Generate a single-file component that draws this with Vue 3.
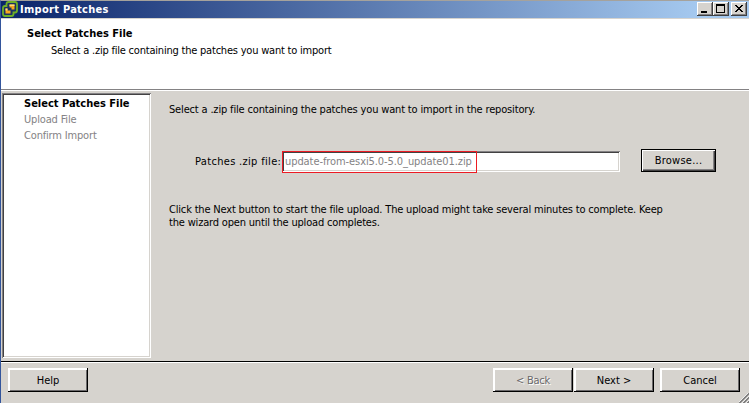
<script setup>
import { ref } from 'vue'

const steps = ['Select Patches File', 'Upload File', 'Confirm Import']
const current = ref(0)
const fileName = ref('update-from-esxi5.0-5.0_update01.zip')
</script>

<template>
  <div class="window">
    <header class="titlebar">
      <svg class="logo" width="16" height="17" viewBox="0 0 16 17">
        <path d="M6.5 1H13Q15 1 15 3V9.5Q15 11.5 13 11.5H11.5V13Q11.5 15 9.5 15H3Q1 15 1 13V7Q1 5 3 5H4.500V3Q4.500 1 6.500 1Z" fill="#1b3263" stroke="#6fb026" stroke-width="1.800" />
        <path d="M7.500 3.500h5v5h-3v-2h-2z" fill="#f9a81d" />
        <path d="M3.500 7.500h2v2h3v3h-5z" fill="#f9a81d" />
        <path d="M7.500 3.500h5v1.500h-5zM3.500 7.500h2v2h-2z" fill="#ffdc79" />
      </svg>
      <span class="caption">Import Patches</span>
      <div class="controls">
        <button class="ctl" aria-label="Minimize">
          <svg width="16" height="14" shape-rendering="crispEdges"><path d="M4 9h6v2H4z" /></svg>
        </button>
        <button class="ctl" aria-label="Maximize">
          <svg width="16" height="14" shape-rendering="crispEdges"><path d="M3 2h9v9H3zM4 4v6h7V4z" fill-rule="evenodd" /></svg>
        </button>
        <button class="ctl close" aria-label="Close">
          <svg width="16" height="14" shape-rendering="crispEdges">
            <path d="M4 3h2v1h1v1h2V4h1V3h2v1h-1v1h-1v1H9v1h1v1h1v1h1v1h-2V9H9V8H7v1H6v1H4V9h1V8h1V7h1V6H6V5H5V4H4z" />
          </svg>
        </button>
      </div>
    </header>

    <section class="heading">
      <h1>Select Patches File</h1>
      <p>Select a .zip file containing the patches you want to import</p>
    </section>

    <main class="body">
      <nav class="steps">
        <div v-for="(step, i) in steps" :key="step" class="step" :class="{ active: i === current }">{{ step }}</div>
      </nav>
      <section class="content">
        <p class="intro">Select a .zip file containing the patches you want to import in the repository.</p>
        <div class="field">
          <label class="label">Patches .zip file:</label>
          <div class="input"><span class="marked">{{ fileName }}</span></div>
          <button class="btn browse"><span>Browse...</span></button>
        </div>
        <p class="note">
          <span class="line">Click the Next button to start the file upload. The upload might take several minutes to complete. Keep</span>
          <span class="line">the wizard open until the upload completes.</span>
        </p>
      </section>
    </main>

    <footer class="footer">
      <button class="btn help"><span>Help</span></button>
      <button class="btn back"><span>&lt; Back</span></button>
      <button class="btn next"><span>Next &gt;</span></button>
      <button class="btn cancel"><span>Cancel</span></button>
      <svg class="grip" width="10" height="10" viewBox="0 0 10 10">
        <path d="M-1 10L10 -1M3 10L10 3M7 10L10 7" stroke="#fff" />
        <path d="M0 10.5L10.500 0M4 10.500L10.500 4M8 10.500L10.500 8" stroke="#777" stroke-width="1.500" />
      </svg>
    </footer>
  </div>
</template>

<style>
body {
  margin: 0;
}
</style>

<style scoped>
* {
  box-sizing: border-box;
}
.window {
  width: 749px;
  height: 403px;
  display: flex;
  flex-direction: column;
  overflow: hidden;
  background: #d6d3ce;
  border-left: 1px solid #33559c;
  border-top: 1px solid #a5a29c;
  color: #000;
  font: 11px/16px "DejaVu Sans Condensed", "DejaVu Sans", sans-serif;
  font-stretch: condensed;
  white-space: nowrap;
}
h1,
p {
  margin: 0;
  font-size: 11px;
}
.titlebar {
  height: 18px;
  flex: none;
  display: flex;
  background: linear-gradient(90deg, #0a246a, #a6caf0 94%);
  border-bottom: 1px solid #d6d3ce;
}
.logo {
  margin-left: 1px;
  flex: none;
}
.caption {
  margin-left: 2px;
  color: #fff;
  font-weight: bold;
  line-height: 17px;
  letter-spacing: 0.28px;
}
.controls {
  display: flex;
  margin: 1px 2px 0 auto;
}
.ctl {
  width: 16px;
  height: 14px;
  padding: 0;
  border: 0;
  background: #d6d3ce;
  box-shadow: inset -1px -1px #404040, inset 1px 1px #fff, inset -2px -2px #848284;
}
.ctl svg {
  display: block;
}
.close {
  margin-left: 2px;
}
.heading {
  height: 71px;
  flex: none;
  padding: 7px 0 0 26px;
  background: #fff;
  border-bottom: 1px solid #848284;
  box-shadow: 0 1px #fff;
}
.heading p {
  padding-left: 24px;
  line-height: 18px;
  letter-spacing: -0.21px;
}
.body {
  height: 272px;
  flex: none;
  display: flex;
  padding: 3px 0 3px 1px;
  border-bottom: 1px solid #000;
  box-shadow: 0 1px #fff;
}
.steps {
  width: 149px;
  padding: 2px 0 0 22px;
  background: #fff;
  box-shadow: inset 1px 1px #848284, inset -1px -1px #fff, inset 2px 2px #424142, inset -2px -2px #d6d3ce;
}
.step {
  height: 16px;
  line-height: 17px;
  color: #848284;
  letter-spacing: -0.17px;
}
.step.active {
  color: #000;
  font-weight: bold;
  letter-spacing: 0;
}
.content {
  flex: 1;
  padding: 8px 0 0 18px;
}
.intro {
  line-height: 17px;
  height: 16px;
  letter-spacing: -0.165px;
}
.field {
  display: flex;
  height: 24px;
  margin: 32px 0 0 26px;
}
.label {
  width: 87px;
  line-height: 25px;
  letter-spacing: 0.32px;
}
.input {
  width: 338px;
  height: 21px;
  margin-top: 2px;
  background: #fff;
  color: #848284;
  box-shadow: inset 1px 1px #848284, inset -1px -1px #fff, inset 2px 2px #424142, inset -2px -2px #d6d3ce;
}
.marked {
  display: block;
  width: 195px;
  height: 22px;
  border: 1px solid #ec1c24;
  padding-left: 2px;
  line-height: 19px;
  letter-spacing: -0.08px;
}
.btn {
  width: 80px;
  height: 24px;
  flex: none;
  padding: 0;
  border: 0;
  color: #000;
  font: inherit;
  line-height: 25px;
  background: #d6d3ce;
  box-shadow: inset -1px -1px #000, inset 2px 2px #fff, inset -2px -2px #6b696b;
}
.browse {
  width: 75px;
  height: 23px;
  margin-left: 21px;
  border: 1px solid #000;
  line-height: 22px;
  letter-spacing: 0.25px;
  box-shadow: inset 1px 1px #fff, inset -1px -1px #424142, inset -2px -2px #848284;
}
.note {
  margin-top: 30px;
  line-height: 13px;
}
.line {
  display: block;
  letter-spacing: -0.18px;
}
.footer {
  flex: 1;
  position: relative;
  display: flex;
  padding: 6px 0 0 7px;
}
.back {
  margin-left: 405px;
  color: #6b696b;
  letter-spacing: -0.25px;
  text-shadow: 1px 1px #fff;
}
.next {
  margin-left: 1px;
}
.cancel {
  margin-left: 6px;
}
.grip {
  position: absolute;
  right: 0;
  bottom: 0;
}
</style>
